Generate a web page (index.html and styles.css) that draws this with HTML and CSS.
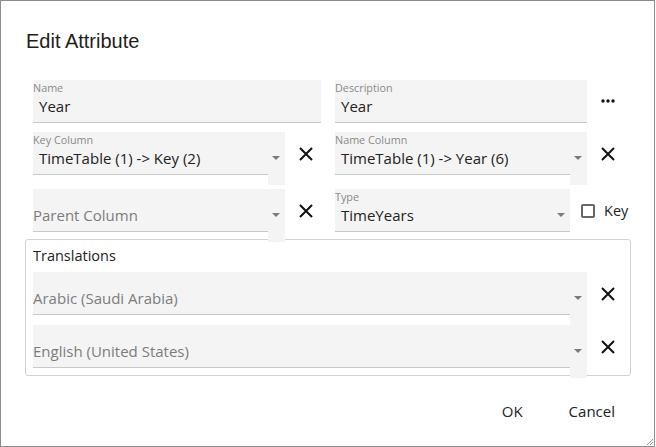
FILE: index.html
```html
<!DOCTYPE html>
<html>
<head>
<meta charset="utf-8">
<link rel="stylesheet" href="styles.css">
</head>
<body>
<div class="window">
  <h1 class="title">Edit Attribute</h1>

  <div class="row row-1">
    <div class="col-left">
      <div class="field w288">
        <div class="label">Name</div>
        <div class="value">Year</div>
      </div>
    </div>
    <div class="col-right">
      <div class="field w252">
        <div class="label">Description</div>
        <div class="value">Year</div>
      </div>
      <button class="more" aria-label="More">
        <svg width="14" height="4" viewBox="0 0 14 4"><circle cx="2" cy="2" r="1.7" fill="#111"/><circle cx="7" cy="2" r="1.7" fill="#111"/><circle cx="12" cy="2" r="1.7" fill="#111"/></svg>
      </button>
    </div>
  </div>

  <div class="row row-2">
    <div class="col-left">
      <div class="sel w252">
        <div class="sel-main">
          <div class="sel-text">
            <div class="label">Key Column</div>
            <div class="value">TimeTable (1) -&gt; Key (2)</div>
          </div>
          <span class="arrow"></span>
        </div>
        <div class="sel-foot"><span class="line"></span><span class="ext"></span></div>
      </div>
      <button class="clear" aria-label="Clear"><svg width="14" height="14" viewBox="0 0 14 14"><path d="M1 1L13 13M13 1L1 13" stroke="#111" stroke-width="2"/></svg></button>
    </div>
    <div class="col-right">
      <div class="sel w252">
        <div class="sel-main">
          <div class="sel-text">
            <div class="label">Name Column</div>
            <div class="value">TimeTable (1) -&gt; Year (6)</div>
          </div>
          <span class="arrow"></span>
        </div>
        <div class="sel-foot"><span class="line"></span><span class="ext"></span></div>
      </div>
      <button class="clear" aria-label="Clear"><svg width="14" height="14" viewBox="0 0 14 14"><path d="M1 1L13 13M13 1L1 13" stroke="#111" stroke-width="2"/></svg></button>
    </div>
  </div>

  <div class="row row-3">
    <div class="col-left">
      <div class="sel w252">
        <div class="sel-main">
          <div class="sel-text">
            <div class="placeholder">Parent Column</div>
          </div>
          <span class="arrow"></span>
        </div>
        <div class="sel-foot"><span class="line"></span><span class="ext"></span></div>
      </div>
      <button class="clear" aria-label="Clear"><svg width="14" height="14" viewBox="0 0 14 14"><path d="M1 1L13 13M13 1L1 13" stroke="#111" stroke-width="2"/></svg></button>
    </div>
    <div class="col-right">
      <div class="field w235 type-field">
        <div class="sel-text">
          <div class="label">Type</div>
          <div class="value">TimeYears</div>
        </div>
        <span class="arrow"></span>
      </div>
      <label class="check"><span class="box"></span><span class="check-text">Key</span></label>
    </div>
  </div>

  <div class="translations">
    <div class="tr-title">Translations</div>
    <div class="tr-row">
      <div class="sel w554">
        <div class="sel-main">
          <div class="sel-text">
            <div class="placeholder">Arabic (Saudi Arabia)</div>
          </div>
          <span class="arrow"></span>
        </div>
        <div class="sel-foot"><span class="line"></span><span class="ext"></span></div>
      </div>
      <button class="clear" aria-label="Clear"><svg width="14" height="14" viewBox="0 0 14 14"><path d="M1 1L13 13M13 1L1 13" stroke="#111" stroke-width="2"/></svg></button>
    </div>
    <div class="tr-row">
      <div class="sel w554">
        <div class="sel-main">
          <div class="sel-text">
            <div class="placeholder">English (United States)</div>
          </div>
          <span class="arrow"></span>
        </div>
        <div class="sel-foot"><span class="line"></span><span class="ext"></span></div>
      </div>
      <button class="clear" aria-label="Clear"><svg width="14" height="14" viewBox="0 0 14 14"><path d="M1 1L13 13M13 1L1 13" stroke="#111" stroke-width="2"/></svg></button>
    </div>
  </div>

  <div class="footer">
    <button class="btn btn-ok">OK</button>
    <button class="btn btn-cancel">Cancel</button>
  </div>

  <svg class="grip" width="9" height="9" viewBox="0 0 9 9"><path d="M8 2L2 8M8 5L5 8" stroke="#9a9a9a" stroke-width="1"/></svg>
</div>
</body>
</html>
```

FILE: styles.css
```css
* { box-sizing: border-box; }
html, body { margin: 0; padding: 0; background: #fff; }
body { font-family: "Open Sans", "DejaVu Sans", sans-serif; color: #222; }

.window {
  position: relative;
  width: 655px;
  height: 447px;
  border: 1px solid #8c8c8c;
  background: #fff;
}

.title {
  margin: 28px 0 0 25px;
  font-family: "Liberation Sans", Arial, sans-serif;
  font-weight: normal;
  font-size: 20px;
  line-height: 24px;
  color: #1e1e1e;
}

.row { display: flex; align-items: flex-start; padding-left: 32px; }
.row-1 { margin-top: 27px; }
.row-2 { margin-top: 9px; }
.row-3 { margin-top: 4px; }

.col-left { width: 302px; display: flex; align-items: flex-start; }
.col-right { display: flex; align-items: flex-start; }

.w288 { width: 288px; }
.w252 { width: 252px; }
.w235 { width: 235px; }
.w554 { width: 554px; }

.field {
  height: 43px;
  background: #f4f4f4;
  border-bottom: 1px solid #c9c9c9;
  padding: 2px 0 0 0;
}

.label {
  font-size: 10.8px;
  line-height: 12px;
  color: #8a8a8a;
}
.value {
  margin-top: 2px;
  padding-left: 6px;
  font-size: 15px;
  line-height: 20px;
  color: #222;
}
.placeholder {
  margin-top: 14px;
  font-size: 15px;
  line-height: 20px;
  color: #7c7c7c;
}

.sel { display: flex; flex-direction: column; }
.sel-main {
  height: 42px;
  background: #f4f4f4;
  padding: 2px 0 0 0;
  display: flex;
  align-items: flex-start;
}
.sel-text { flex: 1; }
.sel-foot { display: flex; height: 11px; }
.sel-foot .line { flex: 1; border-top: 1px solid #c9c9c9; }
.sel-foot .ext { width: 17px; background: #f4f4f4; }

.arrow {
  width: 0; height: 0;
  margin: 22px 5px 0 0;
  border-left: 4px solid transparent;
  border-right: 4px solid transparent;
  border-top: 4px solid #7a7a7a;
}

.type-field { display: flex; align-items: flex-start; }

button { font: inherit; background: none; border: 0; padding: 0; cursor: pointer; }

.clear {
  width: 14px; height: 14px;
  margin: 15px 0 0 14px;
  display: flex;
}
.more {
  width: 14px; height: 4px;
  margin: 19px 0 0 14px;
  display: flex;
}

.check { display: flex; align-items: center; margin: 14px 0 0 11px; }
.check .box {
  width: 14px; height: 14px;
  border: 2px solid #666;
  border-radius: 2px;
}
.check-text { margin-left: 9px; font-size: 14.5px; line-height: 16px; color: #222; }

.translations {
  margin: -3px 0 0 24px;
  width: 606px;
  height: 137px;
  border: 1px solid #d2d2d2;
  border-radius: 3px;
  padding: 6px 0 0 7px;
}
.tr-title { font-size: 14.5px; line-height: 20px; color: #222; margin-bottom: 6px; }
.tr-row { display: flex; align-items: flex-start; }

.footer {
  display: flex;
  justify-content: flex-end;
  margin-top: 25px;
  padding-right: 39px;
}
.btn { font-size: 15px; line-height: 20px; color: #222; }
.btn-cancel { margin-left: 46px; }

.grip { position: absolute; right: 0; bottom: 0; }
```
